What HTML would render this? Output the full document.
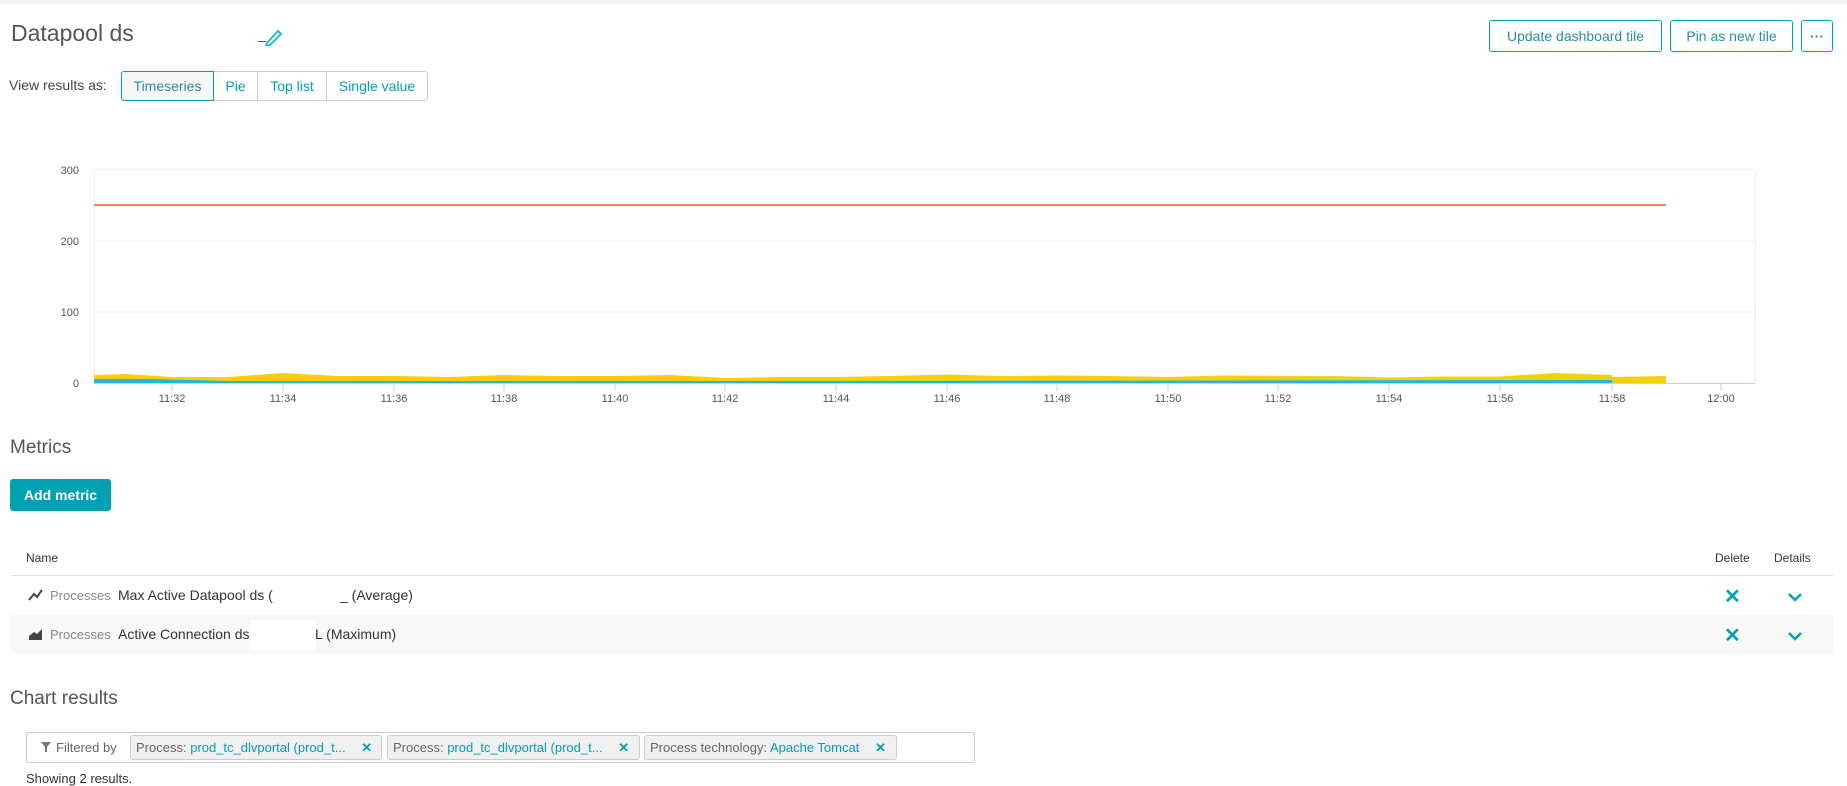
<!DOCTYPE html>
<html><head><meta charset="utf-8">
<style>
*{box-sizing:border-box;margin:0;padding:0}
body{width:1847px;height:784px;overflow:hidden;background:#fff;font-family:"Liberation Sans",sans-serif;color:#454646;position:relative}
.a{position:absolute;white-space:nowrap}
.btn{position:absolute;border:1px solid #00a1b2;border-radius:3px;color:#2a8fa0;font-size:14px;display:flex;align-items:center;justify-content:center;background:#fff}
.seg{position:absolute;top:71px;height:30px;border:1px solid #ccc;color:#00a1b2;font-size:14px;display:flex;align-items:center;justify-content:center;background:#fff}
.row{position:absolute;left:11px;width:1822px;height:39px}
.row .t{position:absolute;top:11px;font-size:14px;color:#333}
.row .t.x{color:#00a1b2}
.chip{position:absolute;top:735px;height:25px;background:#f0f0f0;border:1px solid #ccc;border-radius:3px;font-size:13px;color:#666;padding:4px 0 0 5px;white-space:nowrap}
.chip b{font-weight:normal;color:#00a1b2}
.x{color:#00a1b2;font-weight:bold}
</style></head><body>
<div class="a" style="left:0;top:0;width:1847px;height:4px;background:#f2f2f2"></div>
<div class="a" style="left:11px;top:20px;font-size:23px;color:#555">Datapool ds</div>
<div class="a" style="left:258px;top:26px;font-size:14px;color:#454646">_</div>
<svg class="a" style="left:263px;top:26px" width="22" height="20" viewBox="0 0 22 20"><path d="M4 17 L15 5 L18 8 L7 19 L3 20 Z" fill="none" stroke="#2fb8c9" stroke-width="2"/></svg>
<div class="btn" style="left:1489px;top:20px;width:173px;height:32px">Update dashboard tile</div>
<div class="btn" style="left:1670px;top:20px;width:123px;height:32px">Pin as new tile</div>
<div class="btn" style="left:1801px;top:20px;width:32px;height:32px;font-weight:bold">···</div>
<div class="a" style="left:9px;top:77px;font-size:14px;color:#454646">View results as:</div>
<div class="seg" style="left:121px;width:93px;border-color:#00a1b2;background:#f6f6f6;color:#2a8fa0;border-radius:3px 0 0 3px;z-index:2">Timeseries</div>
<div class="seg" style="left:213px;width:45px">Pie</div>
<div class="seg" style="left:257px;width:70px">Top list</div>
<div class="seg" style="left:326px;width:102px;border-radius:0 3px 3px 0">Single value</div>

<svg class="a" style="left:0;top:150px" width="1847" height="270" viewBox="0 150 1847 270">
<rect x="94.5" y="169.5" width="1661" height="214" fill="none" stroke="#eee"/>
<line x1="94" y1="241" x2="1755" y2="241" stroke="#f0f0f0"/>
<line x1="94" y1="312" x2="1755" y2="312" stroke="#f0f0f0"/>
<line x1="94" y1="205" x2="1666" y2="205" stroke="#f15a22" stroke-width="1.5"/>
<polygon fill="#f5d10a" points="94,375 127,374 172,377 228,377 283,373 338,376 394,376 449,377 504,375 560,376 615,376 670,375 725,378 781,377 836,377 891,376 947,374.5 1002,376 1057,375.5 1113,376 1168,377 1223,375.5 1278,376 1334,376 1389,377.5 1444,376.5 1500,376.5 1555,373 1612,375 1612,377 1666,376 1666,383 94,383"/>
<polygon fill="#1fb7e8" points="94,379 150,379 228,381 600,381 800,381 1612,380 1612,383 94,383"/>
<line x1="94" y1="383.5" x2="1755" y2="383.5" stroke="#c8d4e0"/>
<g stroke="#c8d4e0"><line x1="172" y1="383" x2="172" y2="391"/><line x1="283" y1="383" x2="283" y2="391"/><line x1="394" y1="383" x2="394" y2="391"/><line x1="504" y1="383" x2="504" y2="391"/><line x1="615" y1="383" x2="615" y2="391"/><line x1="725" y1="383" x2="725" y2="391"/><line x1="836" y1="383" x2="836" y2="391"/><line x1="947" y1="383" x2="947" y2="391"/><line x1="1057" y1="383" x2="1057" y2="391"/><line x1="1168" y1="383" x2="1168" y2="391"/><line x1="1278" y1="383" x2="1278" y2="391"/><line x1="1389" y1="383" x2="1389" y2="391"/><line x1="1500" y1="383" x2="1500" y2="391"/><line x1="1612" y1="383" x2="1612" y2="391"/><line x1="1721" y1="383" x2="1721" y2="391"/></g>
<g font-family="Liberation Sans" font-size="11" fill="#555" text-anchor="end"><text x="79" y="174">300</text><text x="79" y="245">200</text><text x="79" y="316">100</text><text x="79" y="387">0</text></g>
<g font-family="Liberation Sans" font-size="11" fill="#555" text-anchor="middle"><text x="172" y="402">11:32</text><text x="283" y="402">11:34</text><text x="394" y="402">11:36</text><text x="504" y="402">11:38</text><text x="615" y="402">11:40</text><text x="725" y="402">11:42</text><text x="836" y="402">11:44</text><text x="947" y="402">11:46</text><text x="1057" y="402">11:48</text><text x="1168" y="402">11:50</text><text x="1278" y="402">11:52</text><text x="1389" y="402">11:54</text><text x="1500" y="402">11:56</text><text x="1612" y="402">11:58</text><text x="1721" y="402">12:00</text></g>
</svg>

<div class="a" style="left:10px;top:437px;font-size:19px;color:#555">Metrics</div>
<div class="a" style="left:10px;top:479px;width:101px;height:32px;background:#00a1b2;border-radius:3px;color:#fff;font-size:14px;font-weight:bold;display:flex;align-items:center;justify-content:center">Add metric</div>

<div class="a" style="left:26px;top:551px;font-size:12px;color:#333">Name</div>
<div class="a" style="left:1715px;top:551px;font-size:12px;color:#333">Delete</div>
<div class="a" style="left:1774px;top:551px;font-size:12px;color:#333">Details</div>
<div class="a" style="left:11px;top:575px;width:1822px;height:1px;background:#e2e2e2"></div>
<div class="row" style="top:576px">
<svg class="a" style="left:17px;top:12px" width="16" height="14"><path d="M1 12 L6 6 L9 9 L14 2" fill="none" stroke="#444" stroke-width="2"/></svg>
<div class="t" style="left:39px;color:#888;font-size:13px;top:12px">Processes</div>
<div class="t" style="left:107px">Max Active Datapool ds (</div>
<div class="t" style="left:329px">_ (Average)</div>
<div class="t x" style="left:1713px;top:8px;font-size:20px">✕</div>
<svg class="a" style="left:1776px;top:16px" width="16" height="10"><path d="M2 2 L8 8 L14 2" fill="none" stroke="#00a1b2" stroke-width="2.5"/></svg>
</div>
<div class="row" style="top:615px;background:#f8f8f8">
<svg class="a" style="left:17px;top:12px" width="16" height="14"><path d="M1 13 L1 9 L6 5 L9 7 L14 2 L14 13 Z" fill="#444"/></svg>
<div class="t" style="left:39px;color:#888;font-size:13px;top:12px">Processes</div>
<div class="t" style="left:107px">Active Connection ds</div>
<div class="a" style="left:239px;top:5px;width:66px;height:30px;background:#fff"></div>
<div class="t" style="left:304px">L (Maximum)</div>
<div class="t x" style="left:1713px;top:8px;font-size:20px">✕</div>
<svg class="a" style="left:1776px;top:16px" width="16" height="10"><path d="M2 2 L8 8 L14 2" fill="none" stroke="#00a1b2" stroke-width="2.5"/></svg>
</div>

<div class="a" style="left:10px;top:688px;font-size:19px;color:#555">Chart results</div>
<div class="a" style="left:26px;top:732px;width:949px;height:31px;border:1px solid #ccc;border-radius:2px"></div>
<svg class="a" style="left:40px;top:741px" width="12" height="12"><path d="M1 1 L11 1 L7 6 L7 11 L5 11 L5 6 Z" fill="#777"/></svg>
<div class="a" style="left:56px;top:740px;font-size:13px;color:#666">Filtered by</div>
<div class="chip" style="left:130px;width:252px">Process: <b>prod_tc_dlvportal (prod_t...</b> <span class="x" style="margin-left:12px">✕</span></div>
<div class="chip" style="left:387px;width:253px">Process: <b>prod_tc_dlvportal (prod_t...</b> <span class="x" style="margin-left:12px">✕</span></div>
<div class="chip" style="left:644px;width:253px">Process technology: <b>Apache Tomcat</b> <span class="x" style="margin-left:12px">✕</span></div>
<div class="a" style="left:26px;top:771px;font-size:13px;color:#333">Showing 2 results.</div>
</body></html>
